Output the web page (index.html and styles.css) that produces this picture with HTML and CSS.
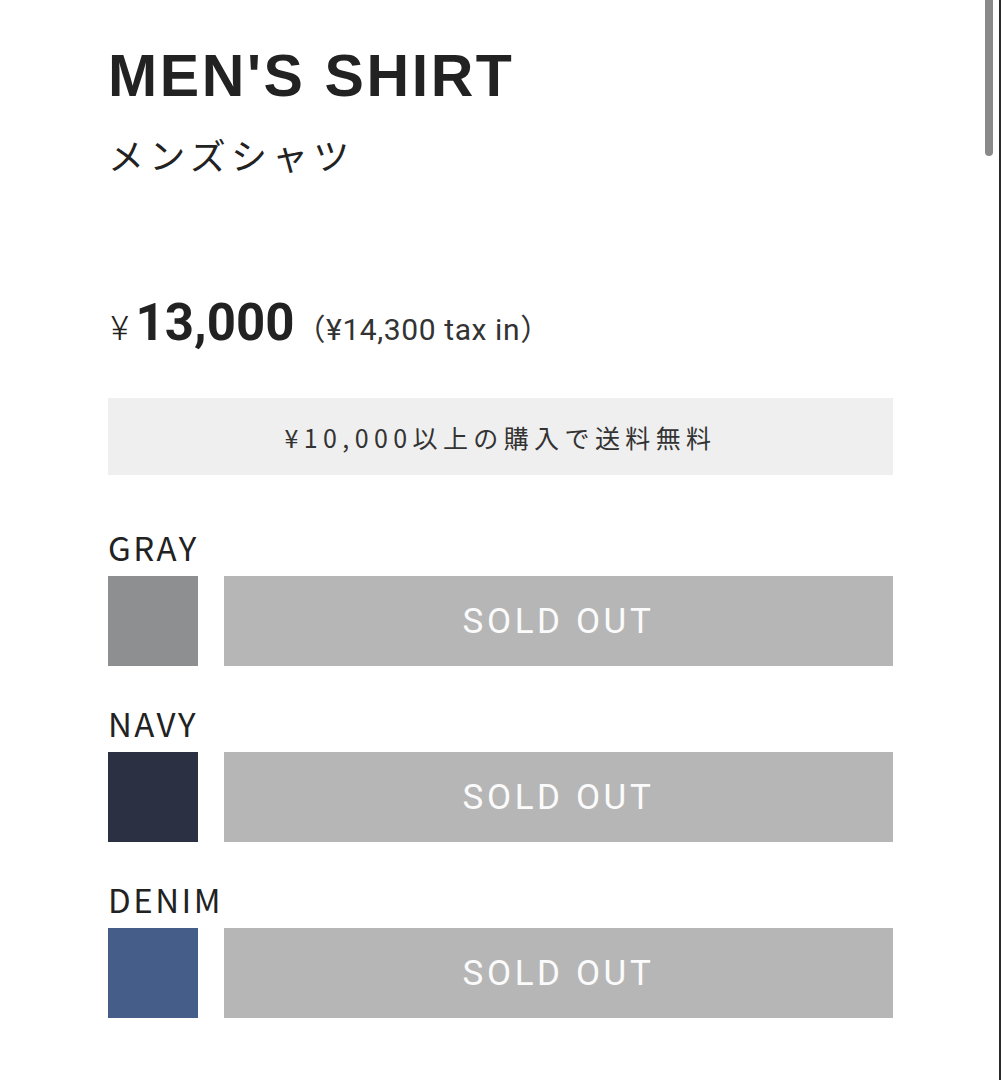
FILE: index.html
```html
<!DOCTYPE html>
<html lang="ja">
<head>
<meta charset="utf-8">
<title>MEN'S SHIRT</title>
<link rel="stylesheet" href="styles.css">
</head>
<body>
<main class="product">
  <h1 class="title">MEN'S SHIRT</h1>
  <p class="subtitle">メンズシャツ</p>
  <div class="price">
    <span class="yen">¥</span><span class="amount">13,000</span><span class="tax">（¥14,300 tax in）</span>
  </div>
  <div class="notice">¥10,000以上の購入で送料無料</div>
  <section class="variant">
    <div class="label">GRAY</div>
    <div class="row">
      <div class="swatch gray"></div>
      <button class="soldout" type="button">SOLD OUT</button>
    </div>
  </section>
  <section class="variant">
    <div class="label">NAVY</div>
    <div class="row">
      <div class="swatch navy"></div>
      <button class="soldout" type="button">SOLD OUT</button>
    </div>
  </section>
  <section class="variant">
    <div class="label">DENIM</div>
    <div class="row">
      <div class="swatch denim"></div>
      <button class="soldout" type="button">SOLD OUT</button>
    </div>
  </section>
</main>
<div class="scroll-thumb"></div>
<div class="edge-line"></div>
</body>
</html>
```
FILE: styles.css
```css
html, body {
  margin: 0;
  padding: 0;
  background: #ffffff;
  overflow: hidden;
}
body {
  color: #222222;
  font-family: "Noto Sans CJK JP", "Noto Sans", sans-serif;
}
.product {
  width: 785px;
  padding: 47px 0 0 108px;
}
.title {
  margin: 0;
  font-family: "Liberation Sans", Arial, sans-serif;
  font-weight: 700;
  font-size: 59px;
  line-height: 1;
  letter-spacing: 2.6px;
  color: #222222;
}
.subtitle {
  margin: 30px 0 0 0;
  font-family: "Noto Sans CJK JP", sans-serif;
  font-weight: 400;
  font-size: 36px;
  line-height: 1;
  letter-spacing: 5.2px;
  color: #222222;
}
.price {
  margin-top: 126px;
  display: flex;
  align-items: baseline;
  height: 50px;
  line-height: 50px;
}
.yen {
  font-family: Roboto, sans-serif;
  font-weight: 300;
  font-size: 34px;
  margin-left: 3px;
  margin-right: 7px;
}
.amount {
  font-family: Roboto, sans-serif;
  font-weight: 700;
  font-size: 51px;
}
.tax {
  font-family: Roboto, "Noto Sans CJK JP", sans-serif;
  font-size: 30px;
  letter-spacing: 0.6px;
  margin-left: 1px;
  color: #333333;
}
.notice {
  margin-top: 50px;
  height: 77px;
  background: #efefef;
  display: flex;
  align-items: center;
  justify-content: center;
  font-family: "Noto Sans CJK JP", sans-serif;
  font-size: 25px;
  letter-spacing: 5.4px;
  color: #333333;
}
.variant {
  margin-top: 55px;
}
.variant + .variant {
  margin-top: 40px;
}
.label {
  font-family: "Noto Sans CJK JP", sans-serif;
  font-size: 33px;
  line-height: 34px;
  letter-spacing: 2.5px;
  color: #222222;
  margin-bottom: 12px;
}
.row {
  display: flex;
  gap: 26px;
  height: 90px;
}
.swatch {
  width: 90px;
  height: 90px;
  flex: none;
}
.gray { background: #8e8f91; }
.navy { background: #2b3142; }
.denim { background: #455e89; }
.soldout {
  flex: 1;
  margin: 0;
  border: 0;
  padding: 0;
  background: #b6b6b6;
  color: #fbfbfb;
  font-family: Roboto, sans-serif;
  font-weight: 400;
  font-size: 35px;
  letter-spacing: 3.6px;
  cursor: default;
}
.scroll-thumb {
  position: fixed;
  left: 985px;
  top: 0;
  width: 8px;
  height: 156px;
  background: #8a8a8a;
  border-radius: 0 0 4px 4px;
}
.edge-line {
  position: fixed;
  left: 999px;
  top: 0;
  width: 2px;
  height: 100%;
  background: #2a2a2a;
}
```
